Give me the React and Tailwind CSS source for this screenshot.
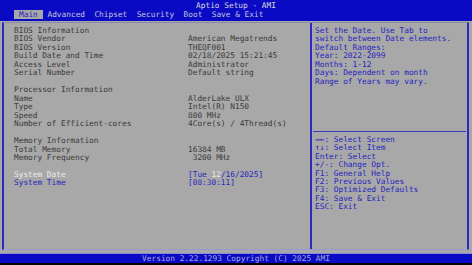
const font = { fontFamily: '"DejaVu Sans Mono", "Liberation Mono", monospace' }

const rows = [
  ["BIOS Information", ""],
  ["BIOS Vendor", "American Megatrends"],
  ["BIOS Version", "THEQF001"],
  ["Build Date and Time", "02/18/2025 15:21:45"],
  ["Access Level", "Administrator"],
  ["Serial Number", "Default string"],
  ["", ""],
  ["Processor Information", ""],
  ["Name", "AlderLake ULX"],
  ["Type", "Intel(R) N150"],
  ["Speed", "800 MHz"],
  ["Number of Efficient-cores", "4Core(s) / 4Thread(s)"],
  ["", ""],
  ["Memory Information", ""],
  ["Total Memory", "16384 MB"],
  ["Memory Frequency", "\u00a03200 MHz"],
  ["", ""],
]

const help = [
  "Set the Date. Use Tab to",
  "switch between Date elements.",
  "Default Ranges:",
  "Year: 2022-2099",
  "Months: 1-12",
  "Days: Dependent on month",
  "Range of Years may vary.",
]

const keys = [
  "\u2192\u2190: Select Screen",
  "\u2191\u2193: Select Item",
  "Enter: Select",
  "+/-: Change Opt.",
  "F1: General Help",
  "F2: Previous Values",
  "F3: Optimized Defaults",
  "F4: Save & Exit",
  "ESC: Exit",
]

const tabs = ["Main", "Advanced", "Chipset", "Security", "Boot", "Save & Exit"]

export default function App() {
  return (
    <div
      className="w-[472px] h-[265px] bg-black flex flex-col text-[7.8px] whitespace-pre overflow-hidden"
      style={font}
    >
      {/* barra superior */}
      <header className="h-[21px] bg-[#0a0ac4] text-[#d8d8d8]">
        <div className="h-[10px] leading-[10px] pt-[1px] text-center">Aptio Setup - AMI</div>
        <div className="flex pl-[14px] h-[9px] leading-[9px]">
          {tabs.map((t, i) => (
            <span
              key={t}
              className={
                i === 0
                  ? "px-[5px] bg-[#a8a8a8] text-[#1c1cc0]"
                  : "px-[4.7px] text-[#c4c4d8]"
              }
            >
              {t}
            </span>
          ))}
        </div>
      </header>

      {/* cuerpo */}
      <main className="h-[232px] bg-[#a8a8a8] pl-[2px] pr-[3px] pt-[1px] pb-[3px]">
        <div className="h-full flex border-l-2 border-r-2 border-l-[#2a2ac0] border-r-[#2a2ac0] border-t border-b border-t-[#8a8aa8] border-b-[#9a9acc]">
          <div className="w-[308px] border-r-2 border-[#2a2ac0] pl-[10px] pt-[4px] leading-[8.47px] text-[#3a3a3a]">
            {rows.map(([l, v], i) => (
              <div key={i} className="flex h-[8.47px]">
                <span className="w-[174px]">{l}</span>
                <span>{v}</span>
              </div>
            ))}
            <div className="flex h-[8.47px]">
              <span className="w-[174px] text-[#ececec]">System Date</span>
              <span className="text-[#2424c0]">
                [Tue <span className="text-[#ececec]">12</span>/16/2025]
              </span>
            </div>
            <div className="flex h-[8.47px] text-[#2424c0]">
              <span className="w-[174px]">System Time</span>
              <span>[08:30:11]</span>
            </div>
          </div>

          <div className="flex-1 flex flex-col text-[#2424c0] leading-[8.47px]">
            <div className="h-[109px] pl-[2px] pt-[4px] border-b border-[#3a3ac0] mx-[1px]">
              {help.map((h) => (
                <div key={h} className="h-[8.47px]">{h}</div>
              ))}
            </div>
            <div className="pl-[3px] pt-[4px]">
              {keys.map((k) => (
                <div key={k} className="h-[8.4px]">{k}</div>
              ))}
            </div>
          </div>
        </div>
      </main>

      {/* pie */}
      <footer className="h-[10px] bg-[#0a0ac4] border-t border-[#8c8cd8] text-center leading-[9px] text-[#a8a8d8]">
        Version 2.22.1293 Copyright (C) 2025 AMI
      </footer>
    </div>
  )
}
